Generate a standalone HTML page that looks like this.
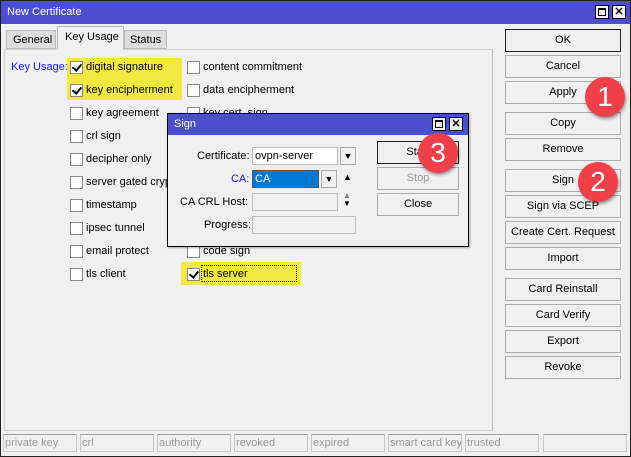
<!DOCTYPE html>
<html><head><style>
*{box-sizing:border-box;margin:0;padding:0}
html,body{width:631px;height:457px;overflow:hidden}
body{background:#f0f0f0;font-family:"Liberation Sans",Arial,sans-serif;font-size:11px;color:#000;position:relative}
.a{position:absolute;white-space:nowrap}
.win{left:0;top:0;width:631px;height:457px;border:1px solid #222;background:#f0f0f0}
.tb{background:#4b4fcf;color:#fff;font-size:11px}
.btn{position:absolute;left:505px;width:116px;height:23px;border:1px solid #adadad;background:#f0f0f0;text-align:center;line-height:21px;white-space:nowrap}
.cb{position:absolute;width:13px;height:13px;border:1px solid #888;background:#fff}
.lbl{position:absolute;white-space:nowrap}
.chk::after{content:"";position:absolute;left:3px;top:0px;width:4px;height:7px;border:solid #000;border-width:0 2px 2px 0;transform:rotate(40deg)}
.st{position:absolute;top:434px;height:18px;border:1px solid #c8c8c8;border-top-color:#a0a0a0;color:#999;padding-left:1px;line-height:16px;white-space:nowrap;overflow:hidden}
.badge{position:absolute;width:40px;height:40px;border-radius:50%;background:#f2404a;color:#fff;font-size:28px;text-align:center;line-height:40px;box-shadow:1px 2px 3px rgba(0,0,0,.4)}
.wb{position:absolute;width:14px;height:14px;background:#f0f0f0;border:1px solid #000}
.inp{position:absolute;height:18px;border:1px solid #c0c0c0;background:#fff;padding-left:2px;line-height:16px;white-space:nowrap}
</style></head><body>
<div class="a win"></div>
<div class="a tb" style="left:1px;top:1px;width:629px;height:23px;padding:5px 0 0 6px">New Certificate</div>
<div class="wb" style="left:595px;top:5px"><div class="a" style="left:2px;top:2px;width:8px;height:8px;border:1px solid #000;border-top-width:2px"></div></div>
<div class="wb" style="left:612px;top:5px;font-size:11px;font-weight:bold;text-align:center;line-height:12px">✕</div>
<div class="a" style="left:6px;top:30px;width:50px;height:19px;border:1px solid #bbb;background:#ddd;padding:3px 0 0 6px">General</div>
<div class="a" style="left:57px;top:26px;width:67px;height:24px;border:1px solid #bbb;border-bottom:none;background:#f0f0f0;padding:4px 0 0 7px">Key Usage</div>
<div class="a" style="left:124px;top:30px;width:43px;height:19px;border:1px solid #bbb;background:#ddd;padding:3px 0 0 5px">Status</div>
<div class="a" style="left:4px;top:49px;width:489px;height:382px;border:1px solid #d0d0d0;border-right-color:#bbb"></div>
<div class="a" style="left:58px;top:49px;width:65px;height:2px;background:#f0f0f0"></div>
<div class="a" style="left:67px;top:58px;width:115px;height:42px;background:#f2e940"></div>
<div class="a" style="left:181px;top:262px;width:120px;height:23px;background:#f2e940"></div>
<div class="lbl" style="left:11px;top:61px;color:#1a1aff">Key Usage:</div>
<div class="cb chk" style="left:70px;top:61px"></div><div class="lbl" style="left:86px;top:61px">digital signature</div>
<div class="cb chk" style="left:70px;top:84px"></div><div class="lbl" style="left:86px;top:84px">key encipherment</div>
<div class="cb" style="left:70px;top:107px"></div><div class="lbl" style="left:86px;top:107px">key agreement</div>
<div class="cb" style="left:70px;top:130px"></div><div class="lbl" style="left:86px;top:130px">crl sign</div>
<div class="cb" style="left:70px;top:153px"></div><div class="lbl" style="left:86px;top:153px">decipher only</div>
<div class="cb" style="left:70px;top:176px"></div><div class="lbl" style="left:86px;top:176px">server gated crypto</div>
<div class="cb" style="left:70px;top:199px"></div><div class="lbl" style="left:86px;top:199px">timestamp</div>
<div class="cb" style="left:70px;top:222px"></div><div class="lbl" style="left:86px;top:222px">ipsec tunnel</div>
<div class="cb" style="left:70px;top:245px"></div><div class="lbl" style="left:86px;top:245px">email protect</div>
<div class="cb" style="left:70px;top:268px"></div><div class="lbl" style="left:86px;top:268px">tls client</div>
<div class="cb" style="left:187px;top:61px"></div><div class="lbl" style="left:203px;top:61px">content commitment</div>
<div class="cb" style="left:187px;top:84px"></div><div class="lbl" style="left:203px;top:84px">data encipherment</div>
<div class="cb" style="left:187px;top:107px"></div><div class="lbl" style="left:203px;top:107px">key cert. sign</div>
<div class="cb" style="left:187px;top:245px"></div><div class="lbl" style="left:203px;top:245px">code sign</div>
<div class="cb chk" style="left:187px;top:268px"></div><div class="lbl" style="left:201px;top:265px;border:1px dotted #000;width:96px;height:17px;padding:2px 0 0 1px">tls server</div>
<div class="btn" style="top:29px;border-color:#222">OK</div>
<div class="btn" style="top:55px">Cancel</div>
<div class="btn" style="top:81px">Apply</div>
<div class="btn" style="top:112px">Copy</div>
<div class="btn" style="top:138px">Remove</div>
<div class="btn" style="top:169px">Sign</div>
<div class="btn" style="top:195px">Sign via SCEP</div>
<div class="btn" style="top:221px">Create Cert. Request</div>
<div class="btn" style="top:247px">Import</div>
<div class="btn" style="top:278px">Card Reinstall</div>
<div class="btn" style="top:304px">Card Verify</div>
<div class="btn" style="top:330px">Export</div>
<div class="btn" style="top:356px">Revoke</div>
<div class="st" style="left:3px;width:74px">private key</div>
<div class="st" style="left:80px;width:74px">crl</div>
<div class="st" style="left:157px;width:74px">authority</div>
<div class="st" style="left:234px;width:74px">revoked</div>
<div class="st" style="left:311px;width:74px">expired</div>
<div class="st" style="left:388px;width:74px">smart card key</div>
<div class="st" style="left:465px;width:74px">trusted</div>
<div class="st" style="left:543px;width:84px"></div>
<div class="a" style="left:167px;top:113px;width:302px;height:134px;border:1px solid #000;background:#f0f0f0;box-shadow:1px 1px 2px rgba(0,0,0,.3)"></div>
<div class="a tb" style="left:168px;top:114px;width:300px;height:21px;padding:4px 0 0 6px">Sign</div>
<div class="wb" style="left:432px;top:117px"><div class="a" style="left:2px;top:2px;width:8px;height:8px;border:1px solid #000;border-top-width:2px"></div></div>
<div class="wb" style="left:449px;top:117px;font-size:11px;font-weight:bold;text-align:center;line-height:12px">✕</div>
<div class="lbl" style="left:197px;top:150px">Certificate:</div>
<div class="inp" style="left:252px;top:147px;width:86px">ovpn-server</div>
<div class="inp" style="left:340px;top:147px;width:16px;border-color:#aaa;background:#f0f0f0;font-size:9px;text-align:center;padding:0">▼</div>
<div class="lbl" style="left:231px;top:173px;color:#1a1aff">CA:</div>
<div class="inp" style="left:252px;top:170px;width:67px;background:#0078d7;color:#fff;border-color:#555">CA</div>
<div class="inp" style="left:321px;top:170px;width:16px;border-color:#aaa;background:#f0f0f0;font-size:9px;text-align:center;padding:0">▼</div>
<div class="lbl" style="left:343px;top:172px;font-size:9px">▲</div>
<div class="lbl" style="left:180px;top:196px">CA CRL Host:</div>
<div class="inp" style="left:252px;top:193px;width:86px;background:#f0f0f0"></div>
<div class="lbl" style="left:343px;top:192px;font-size:8px;line-height:8px;color:#777">▲<br><span style="color:#000">▼</span></div>
<div class="lbl" style="left:204px;top:219px">Progress:</div>
<div class="inp" style="left:252px;top:216px;width:104px;background:#f0f0f0"></div>
<div class="a" style="left:377px;top:141px;width:82px;height:23px;border:1px solid #222;text-align:center;line-height:21px">Start</div>
<div class="a" style="left:377px;top:167px;width:82px;height:23px;border:1px solid #adadad;text-align:center;line-height:21px;color:#999">Stop</div>
<div class="a" style="left:377px;top:193px;width:82px;height:23px;border:1px solid #adadad;text-align:center;line-height:21px">Close</div>
<div class="badge" style="left:585px;top:77px">1</div>
<div class="badge" style="left:578px;top:162px">2</div>
<div class="badge" style="left:418px;top:133px">3</div>
</body></html>
